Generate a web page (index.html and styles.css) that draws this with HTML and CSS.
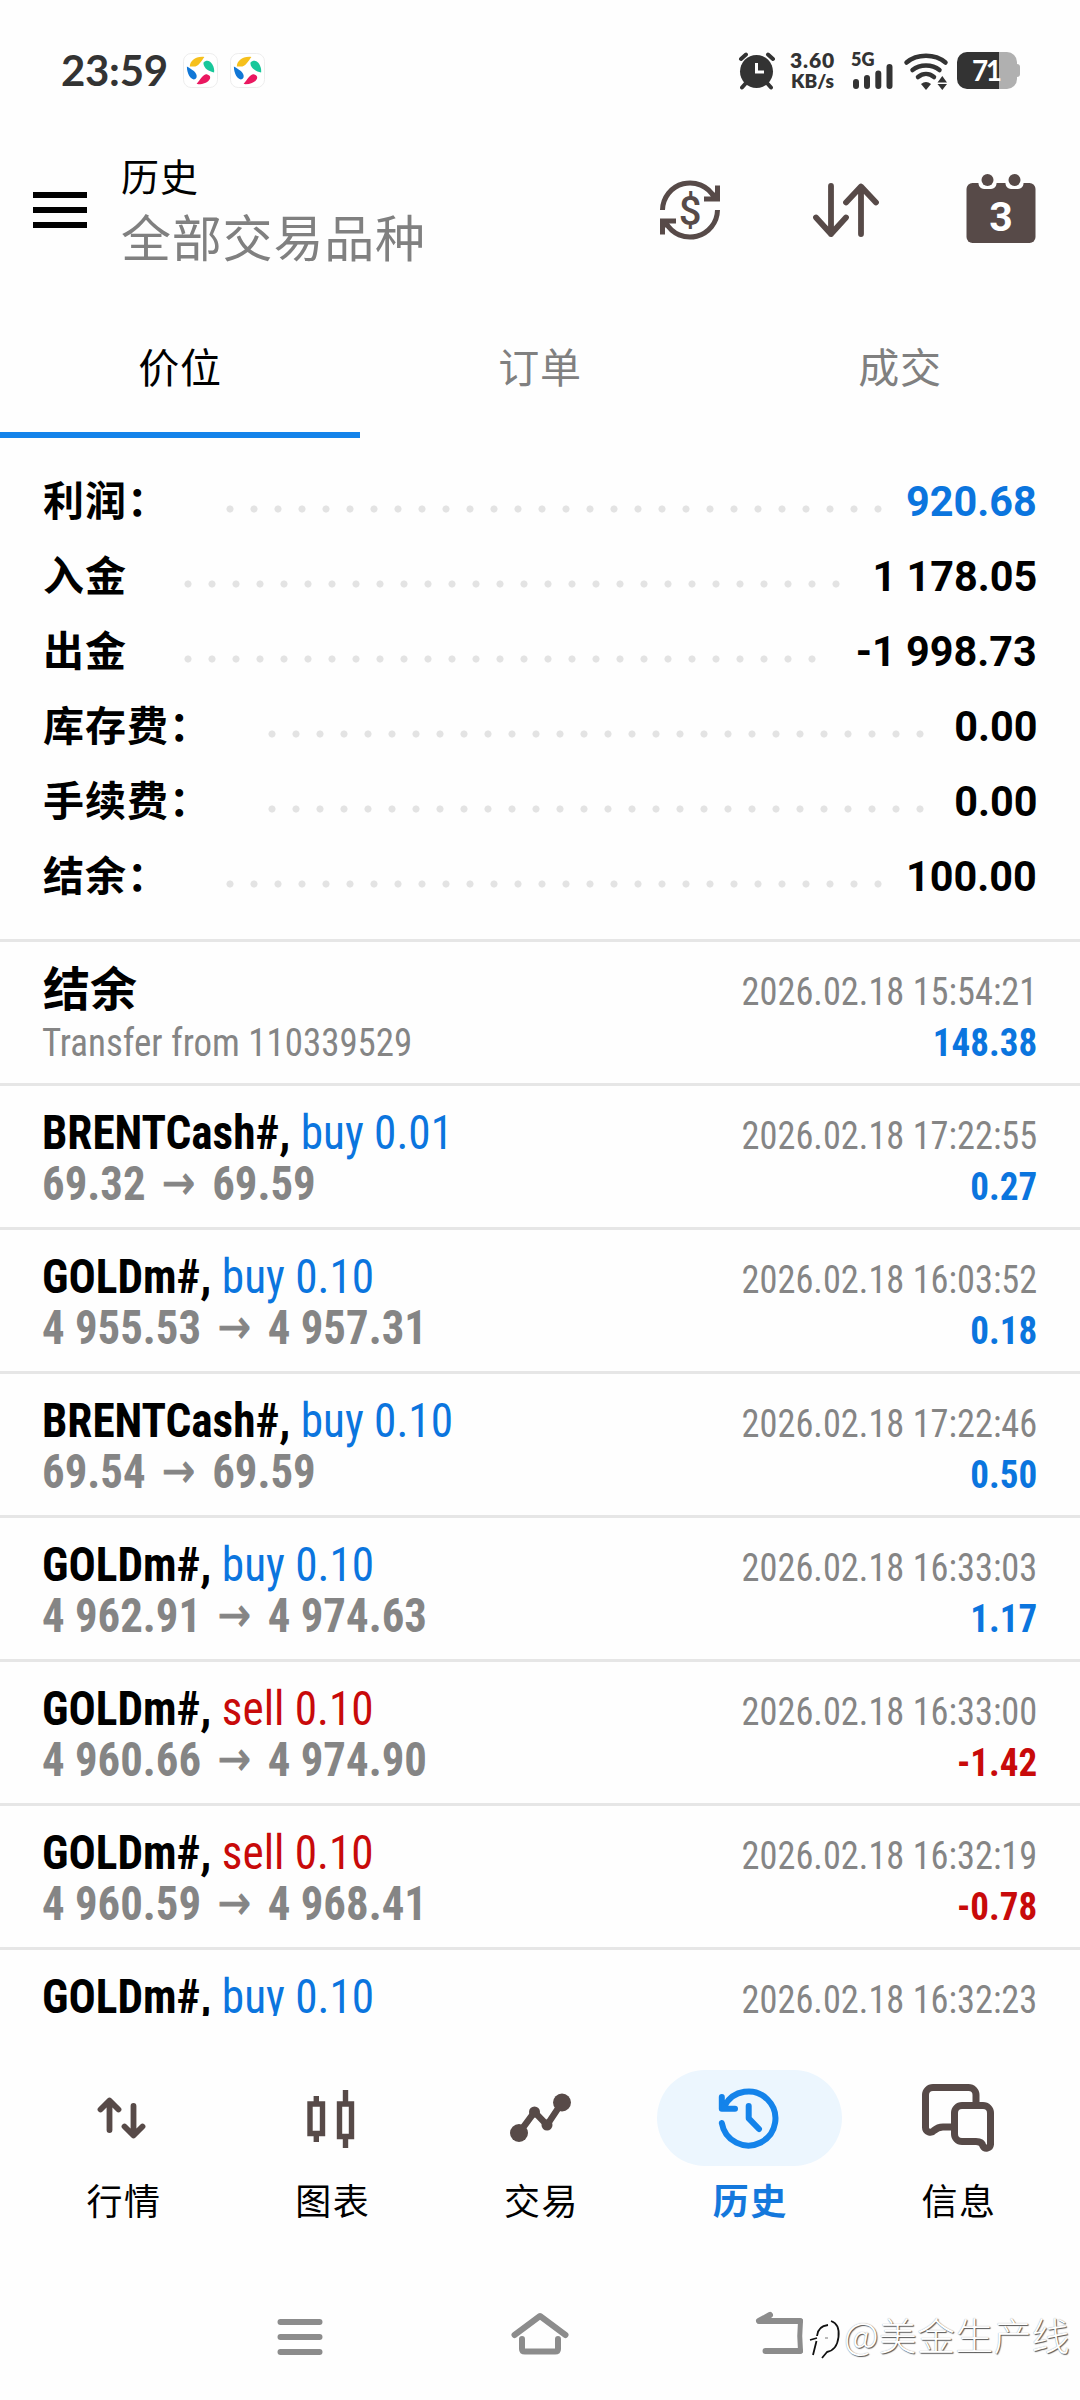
FILE: index.html
```html
<!DOCTYPE html>
<html lang="zh-CN">
<head>
<meta charset="utf-8">
<title>历史</title>
<link rel="stylesheet" href="styles.css">
</head>
<body>
<div class="phone">
  <div class="status">
    <div class="status-left">
      <span class="clock">23:59</span>
      <svg class="app" viewBox="0 0 36 36"><rect x=".5" y=".5" width="35" height="35" rx="8" fill="#fff" stroke="#ececec"/><path d="M7 14C7 8 13 3 22 4C19 8 16 14 11 14Z" fill="#f6c01c"/><path d="M21 10C26 4 33 12 32 20C27 19 21 16 21 10Z" fill="#18c79a"/><path d="M4 14C9 17 15 20 14 25C11 31 4 24 4 14Z" fill="#1177d6"/><path d="M14 32C18 27 21 21 25 22C32 24 26 33 14 32Z" fill="#ea1860"/></svg>
      <svg class="app" viewBox="0 0 36 36"><rect x=".5" y=".5" width="35" height="35" rx="8" fill="#fff" stroke="#ececec"/><path d="M7 14C7 8 13 3 22 4C19 8 16 14 11 14Z" fill="#f6c01c"/><path d="M21 10C26 4 33 12 32 20C27 19 21 16 21 10Z" fill="#18c79a"/><path d="M4 14C9 17 15 20 14 25C11 31 4 24 4 14Z" fill="#1177d6"/><path d="M14 32C18 27 21 21 25 22C32 24 26 33 14 32Z" fill="#ea1860"/></svg>
    </div>
    <div class="status-right">
      <svg class="alarm" viewBox="0 0 38 37"><circle cx="18.500" cy="19.500" r="16.500" fill="#333"/><path d="M3 7L8 2.500M35 7L30 2.500M8 31L4 35.500M29 31L33 35.500" stroke="#333" stroke-width="4" stroke-linecap="round"/><path d="M18.500 11V20H26" fill="none" stroke="#fff" stroke-width="3"/></svg>
      <div class="speed"><span class="speed-n">3.60</span><span class="speed-u">KB/s</span></div>
      <div class="cell"><span>5G</span><svg viewBox="0 0 40 25"><path d="M3 18V22M14 14V22M25.300 9.500V22M36.500 3V22" stroke="#333" stroke-width="6" stroke-linecap="round"/></svg></div>
      <svg class="wifi" viewBox="0 0 44 37"><g fill="none" stroke="#333" stroke-width="4.500" stroke-linecap="round"><path d="M2.500 9.500C13 .5 31 .5 41.500 9.500"/><path d="M8.500 17C16 11 28 11 35.500 17"/><path d="M14 24C19 20 25 20 30 24"/></g><path d="M17 31Q22 27 27 31L22 37Z" fill="#333"/><path d="M33.500 29.500L38.300 23L43 29.500ZM33.500 31L38.300 37L43 31Z" fill="#333"/></svg>
      <div class="battery"><span>71</span></div>
    </div>
  </div>

  <header class="header">
    <svg class="menu" viewBox="0 0 54 36"><path d="M0 3H54M0 18H54M0 33H54" stroke="#000" stroke-width="6"/></svg>
    <div class="titles"><h1>历史</h1><p>全部交易品种</p></div>
    <div class="actions">
      <svg class="act" viewBox="0 0 72 72"><g transform="translate(6 6)"><g id="half"><path d="M2.500 30A27.500 27.500 0 0 1 54 17" fill="none" stroke="#574a48" stroke-width="5"/><path d="M60 5.500V21.500H44V16.500H51L55 12V5.500Z" fill="#574a48"/></g><use href="#half" transform="rotate(180 30 30)"/><text class="dollar" x="30" y="44.500">$</text></g></svg>
      <svg class="act" viewBox="0 0 72 72"><path d="M21 12V60M6 43.500L21 60L36 43.500M51 60V13M36 28.500L51 12.500L66 28.500" fill="none" stroke="#574a48" stroke-width="5.800" stroke-linecap="round" stroke-linejoin="round"/></svg>
      <svg class="act" viewBox="0 0 72 72"><rect x="1.500" y="9" width="69" height="60" rx="6" fill="#574a48"/><path d="M13.500 7H31.500V10A6 6 0 0 1 26 15H19A6 6 0 0 1 13.500 10ZM40.500 7H58.500V10A6 6 0 0 1 53 15H46A6 6 0 0 1 40.500 10Z" fill="#fff"/><circle cx="22.500" cy="6" r="6" fill="#574a48"/><circle cx="49.500" cy="6" r="6" fill="#574a48"/><text class="day" x="36" y="56.500">3</text></svg>
    </div>
  </header>

  <nav class="tabs"><span class="tab active">价位</span><span class="tab">订单</span><span class="tab">成交</span></nav>

  <section class="summary">
    <div class="sum"><span class="label">利润：</span><i class="dots"></i><b class="blue">920.68</b></div>
    <div class="sum"><span class="label">入金</span><i class="dots"></i><b>1 178.05</b></div>
    <div class="sum"><span class="label">出金</span><i class="dots short"></i><b>-1 998.73</b></div>
    <div class="sum"><span class="label">库存费：</span><i class="dots"></i><b>0.00</b></div>
    <div class="sum"><span class="label">手续费：</span><i class="dots"></i><b>0.00</b></div>
    <div class="sum"><span class="label">结余：</span><i class="dots"></i><b>100.00</b></div>
  </section>

  <main class="list">
    <div class="row"><div class="name cjk">结余</div><div class="date">2026.02.18 15:54:21</div><div class="price"><span class="comment">Transfer from 110339529</span></div><div class="value blue">148.38</div></div>
    <div class="row"><div class="name">BRENTCash#, <span class="side blue">buy 0.01</span></div><div class="date">2026.02.18 17:22:55</div><div class="price">69.32<span class="to">→</span>69.59</div><div class="value blue">0.27</div></div>
    <div class="row"><div class="name">GOLDm#, <span class="side blue">buy 0.10</span></div><div class="date">2026.02.18 16:03:52</div><div class="price">4 955.53<span class="to">→</span>4 957.31</div><div class="value blue">0.18</div></div>
    <div class="row"><div class="name">BRENTCash#, <span class="side blue">buy 0.10</span></div><div class="date">2026.02.18 17:22:46</div><div class="price">69.54<span class="to">→</span>69.59</div><div class="value blue">0.50</div></div>
    <div class="row"><div class="name">GOLDm#, <span class="side blue">buy 0.10</span></div><div class="date">2026.02.18 16:33:03</div><div class="price">4 962.91<span class="to">→</span>4 974.63</div><div class="value blue">1.17</div></div>
    <div class="row"><div class="name">GOLDm#, <span class="side red">sell 0.10</span></div><div class="date">2026.02.18 16:33:00</div><div class="price">4 960.66<span class="to">→</span>4 974.90</div><div class="value red">-1.42</div></div>
    <div class="row"><div class="name">GOLDm#, <span class="side red">sell 0.10</span></div><div class="date">2026.02.18 16:32:19</div><div class="price">4 960.59<span class="to">→</span>4 968.41</div><div class="value red">-0.78</div></div>
    <div class="row"><div class="name">GOLDm#, <span class="side blue">buy 0.10</span></div><div class="date">2026.02.18 16:32:23</div></div>
  </main>

  <nav class="bottom">
    <div class="item"><div class="pill"><svg viewBox="0 0 96 96"><path d="M34.500 60V31M25.500 39.500L34.500 30.500L43.500 39.500M58.500 36V65M49.500 56.500L58.500 65.500L67.500 56.500" fill="none" stroke="#574a48" stroke-width="5.800" stroke-linecap="round" stroke-linejoin="round"/></svg></div><span>行情</span></div>
    <div class="item"><div class="pill"><svg viewBox="0 0 96 96"><path d="M26 34H38.500V63.500H26ZM55.500 34H67.500V66.500H55.500ZM32.300 26V33M32.300 65V72M61.500 20V33M61.500 67V78" fill="none" stroke="#574a48" stroke-width="5.400"/></svg></div><span>图表</span></div>
    <div class="item"><div class="pill"><svg viewBox="0 0 96 96"><path d="M26 63L41.500 42L54 55L69 32.500" fill="none" stroke="#574a48" stroke-width="6.500"/><g fill="#574a48"><circle cx="26" cy="63" r="9"/><circle cx="41.500" cy="42" r="5.500"/><circle cx="54" cy="55" r="5.500"/><circle cx="69" cy="32.500" r="9"/></g></svg></div><span>交易</span></div>
    <div class="item on"><div class="pill"><svg viewBox="0 0 96 96"><path d="M19.800 53A27 27 0 1 0 22.500 36M19.800 27V38.700H33M46.700 36V48.300L57 59" fill="none" stroke="#1483ea" stroke-width="6" stroke-linecap="round" stroke-linejoin="round"/><path d="M19.800 31L27 38.700H19.800Z" fill="#1483ea"/></svg></div><span>历史</span></div>
    <div class="item"><div class="pill"><svg viewBox="0 0 96 96"><path d="M65 36V25A7.500 7.500 0 0 0 57.500 17.500H22A7.500 7.500 0 0 0 14.500 25V57.500A4.800 4.800 0 0 0 23 60.500Q27 57 32 57H42M51 35.500H72A7.500 7.500 0 0 1 79.500 43V74.500A4 4 0 0 1 72 76Q71 71.500 65 71.500H51A7.500 7.500 0 0 1 43.500 64V43A7.500 7.500 0 0 1 51 35.500Z" fill="none" stroke="#574a48" stroke-width="7" stroke-linejoin="round"/></svg></div><span>信息</span></div>
  </nav>

  <div class="sysnav">
    <svg viewBox="0 0 60 60"><path d="M10.500 15H49.500M10.500 30H49.500M10.500 45H49.500" stroke="#8c8c8c" stroke-width="6" stroke-linecap="round"/></svg>
    <svg viewBox="0 0 60 60"><path d="M4.500 28L30 9L55.500 28M12 32V42Q12 44.500 15 44.500H45Q48 44.500 48 42V32" fill="none" stroke="#8c8c8c" stroke-width="6" stroke-linecap="round" stroke-linejoin="round"/></svg>
    <svg viewBox="0 0 60 60"><path d="M20 8L9 14H50M15.500 44H50" fill="none" stroke="#8c8c8c" stroke-width="6" stroke-linecap="round" stroke-linejoin="round"/><path d="M50.500 14Q49 29 50.500 44" fill="none" stroke="#8c8c8c" stroke-width="5" stroke-linecap="round"/></svg>
    <div class="mark"><svg viewBox="0 0 36 44"><path d="M5 38L8.500 24M2 23L9 21M9 19Q10 9 20 8" fill="none" stroke="#111" stroke-width="1.800"/><path d="M23 4Q32 7 30.500 20Q29 33 19 35L14 41" fill="none" stroke="#111" stroke-width="1.800"/><path d="M17 21H20" stroke="#777"/></svg><span>@美金生产线</span></div>
  </div>
</div>
</body>
</html>
```
FILE: styles.css
```css
* { box-sizing: border-box; margin: 0; padding: 0; }
body { width: 1080px; background: #fefefe; font-family: Roboto, "Noto Sans CJK SC", sans-serif; color: #000; }
.phone { width: 1080px; height: 2400px; display: flex; flex-direction: column; overflow: hidden; }
svg { display: block; flex: none; overflow: visible; }
.blue { color: #0b75de; }
.red { color: #c80a0a; }

.status { height: 140px; flex: none; padding: 52px 63px 0 61px; display: flex; justify-content: space-between; color: #333; }
.status-left { display: flex; height: 37px; align-items: center; }
.clock { width: 122px; font: 700 42px/37px Lato, sans-serif; letter-spacing: -.3px; }
.app { width: 35px; height: 35px; margin-right: 12px; }
.status-right { display: flex; height: 38px; }
.alarm { width: 38px; height: 37px; }
.speed { width: 63px; display: flex; flex-direction: column; align-items: center; font: 800 21px/17px Lato, sans-serif; padding-left: 10px; margin-right: 4px; }
.speed-n { letter-spacing: .8px; line-height: 16px; }
.speed-u { font-size: 19px; line-height: 20px; margin-top: 3px; }
.cell { width: 53px; font: 800 18px/15px Lato, sans-serif; padding-left: 8px; }
.cell span { display: block; height: 13px; }
.cell svg { width: 40px; height: 25px; margin: -1px 0 0 2px; }
.wifi { width: 44px; height: 37px; margin: 1px 9px 0 8px; }
.battery { position: relative; width: 60px; height: 37px; border-radius: 10px; background: linear-gradient(90deg, #333 42px, #b0b0b0 42px); padding-left: 15px; color: #fff; font: 700 28px/36px Lato, sans-serif; letter-spacing: -2.5px; }
.battery::after { content: ""; position: absolute; left: 60px; top: 12px; width: 3px; height: 13px; border-radius: 0 3px 3px 0; background: #b0b0b0; }

.header { height: 160px; flex: none; display: flex; padding-left: 33px; }
.menu { width: 54px; height: 36px; margin: 52px 34px 0 0; }
.titles { flex: 1; padding-top: 16px; }
.titles h1 { font-size: 38px; line-height: 44px; font-weight: 400; letter-spacing: 1px; }
.titles p { font-size: 50px; line-height: 80px; letter-spacing: .8px; color: #808080; }
.actions { display: flex; gap: 83.500px; padding: 34px 43px 0 0; }
.act { width: 72px; height: 72px; }
.dollar { font: 500 40px Roboto, sans-serif; text-anchor: middle; fill: #574a48; }
.day { font: 700 41px Roboto, sans-serif; text-anchor: middle; fill: #fff; }

.tabs { height: 138px; flex: none; display: grid; grid-template-columns: repeat(3, 1fr); }
.tab { text-align: center; font-size: 41px; line-height: 138px; color: #808080; letter-spacing: .7px; }
.tab.active { color: #000; height: 138px; border-bottom: 6px solid #1483ea; }

.summary { height: 501px; flex: none; padding: 26px 43px 0; }
.sum { height: 75px; display: flex; align-items: center; line-height: 75px; font-size: 41px; font-weight: 700; }
.label { letter-spacing: 1px; padding-top: 2px; }
.dots { width: 672px; height: 8px; margin: 15px 0 0 49px; background: radial-gradient(circle, #e3e3e3 3.2px, transparent 3.9px) 0 0 / 24px 8px repeat-x; }
.dots.short { width: 648px; }
.sum b { margin-left: auto; font-size: 42px; font-weight: 700; transform: scaleX(.985); transform-origin: right; }

.list { height: 1077px; flex: none; overflow: hidden; }
.row { height: 144px; border-top: 3px solid #e6e6e6; padding: 21px 43px 0 42px; display: grid; grid-template-columns: auto auto; grid-template-rows: 51px 50px; justify-content: space-between; align-items: baseline; font-stretch: 75%; font-family: "Roboto Condensed", Roboto, "Noto Sans CJK SC", sans-serif; }
/* Slightly narrower than the condensed face's own width. */
.name, .price { font-size: 48px; line-height: 50px; font-weight: 700; white-space: pre; transform: translateY(1px) scaleX(.942); transform-origin: left; }
.name.cjk { font-size: 47px; transform: translate(1px, 2px); }
.side { font-weight: 400; }
.price { color: #858585; transform: translateY(1px) scaleX(.933); }
.comment { font-size: 39px; font-weight: 400; display: inline-block; transform: scaleX(1.014); transform-origin: left; }
.to { display: inline-block; line-height: 40px; font-family: "DejaVu Sans", sans-serif; font-weight: 400; font-size: 47px; margin: 0 18px; -webkit-text-stroke: 1px #858585; transform: translateY(-1px); }
.date, .value { font-size: 39px; line-height: 44px; text-align: right; transform-origin: right; }
.date { color: #858585; transform: translateY(1px) scaleX(.932); }
.value { font-weight: 700; transform: translateY(1px) scaleX(.95); }

.bottom { height: 240px; flex: none; padding: 54px 17px 0 19px; display: grid; grid-template-columns: repeat(5, 1fr); }
.item { display: flex; flex-direction: column; align-items: center; font-size: 36px; letter-spacing: 1.5px; }
.item span { line-height: 74px; padding-left: 1px; }
.pill { width: 185px; height: 96px; border-radius: 48px; display: flex; justify-content: center; }
.pill svg { width: 96px; height: 96px; }
.on { color: #1478dc; font-weight: 700; }
.on .pill { background: #ecf6fe; }

.sysnav { position: relative; height: 144px; flex: none; padding: 51px 270px 0; display: flex; justify-content: space-between; }
.sysnav > svg { width: 60px; height: 60px; }
.mark { position: absolute; left: 808px; top: 59px; display: flex; }
.mark svg { width: 36px; height: 44px; margin-top: 2px; }
.mark span { font: 300 38px/37px "Noto Sans CJK SC", sans-serif; color: #fff; text-shadow: 1px 1px 1px #555, 0 0 1px #999; white-space: nowrap; letter-spacing: .2px; }
```
